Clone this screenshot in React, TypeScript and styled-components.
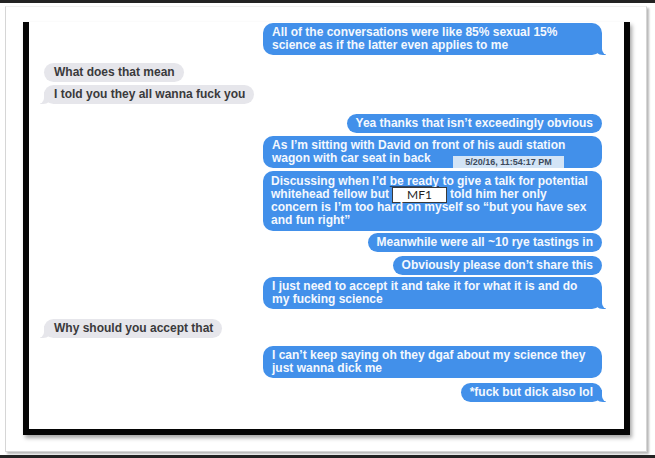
import React from "react";
import styled, { createGlobalStyle, css } from "styled-components";

const Global = createGlobalStyle`
  html, body { margin: 0; padding: 0; background: #ffffff; }
  body { font-family: "Liberation Sans", Arial, sans-serif; }
  * { box-sizing: border-box; }
`;

const Screen = styled.div`
  width: 655px;
  height: 458px;
  display: flex;
  flex-direction: column;
  background: #ffffff;
  overflow: hidden;
`;

const EdgeBar = styled.div`
  height: 3px;
  flex: none;
  background: #232323;
`;

const Stage = styled.div`
  flex: 1;
  display: flex;
  padding: 3px 8px 3px 5px;
`;

const Paper = styled.div`
  flex: 1;
  display: flex;
  flex-direction: column;
  background: #ffffff;
  border: 1px solid #d6d6d6;
  border-top-color: #f0f0f0;
  box-shadow: 2px 2px 2px rgba(0, 0, 0, 0.28);
  padding: 15px 16px 16px 17px;
`;

const Frame = styled.div`
  flex: 1;
  display: flex;
  flex-direction: column;
  background: #ffffff;
  border-left: 6px solid #050505;
  border-right: 6px solid #050505;
  border-bottom: 6px solid #050505;
  box-shadow: 2px 3px 4px rgba(0, 0, 0, 0.35);
`;

const Thread = styled.div`
  display: flex;
  flex-direction: column;
  padding: 1px 22px 0 15px;
`;

type Side = "me" | "them";

const BLUE = "#4290ea";
const GREY = "#e6e6eb";

const Bubble = styled.div<{
  $side: Side;
  $gap: number;
  $wide?: boolean;
  $tail?: boolean;
  $tall?: boolean;
}>`
  position: relative;
  margin-top: ${(p) => p.$gap}px;
  align-self: ${(p) => (p.$side === "me" ? "flex-end" : "flex-start")};
  width: ${(p) => (p.$wide ? "339px" : "auto")};
  padding: ${(p) => (p.$tall ? "4px 9px 4px 8px" : "3px 9px 3px 9px")};
  border-radius: 10px;
  font-family: "Liberation Sans", Arial, sans-serif;
  font-weight: 700;
  font-size: 12px;
  line-height: 13px;
  white-space: nowrap;
  ${(p) =>
    p.$side === "me"
      ? css`
          background: ${BLUE};
          color: #f4f8fe;
        `
      : css`
          background: ${GREY};
          color: #3a3a3c;
          padding-left: 10px;
        `}

  ${(p) =>
    p.$tail &&
    (p.$side === "me"
      ? css`
          &::before {
            content: "";
            position: absolute;
            bottom: 0;
            right: -4px;
            width: 12px;
            height: 12px;
            background: ${BLUE};
            border-bottom-left-radius: 9px 8px;
          }
          &::after {
            content: "";
            position: absolute;
            bottom: 0;
            right: -12px;
            width: 12px;
            height: 12px;
            background: #ffffff;
            border-bottom-left-radius: 6px;
          }
        `
      : css`
          &::before {
            content: "";
            position: absolute;
            bottom: 0;
            left: -4px;
            width: 12px;
            height: 12px;
            background: ${GREY};
            border-bottom-right-radius: 9px 8px;
          }
          &::after {
            content: "";
            position: absolute;
            bottom: 0;
            left: -12px;
            width: 12px;
            height: 12px;
            background: #ffffff;
            border-bottom-right-radius: 6px;
          }
        `)}
`;

const Line = styled.span`
  display: block;
  position: relative;
  z-index: 1;
`;

const Stamp = styled.span`
  position: absolute;
  z-index: 2;
  left: 190px;
  top: 20px;
  width: 111px;
  height: 12px;
  display: flex;
  align-items: center;
  justify-content: center;
  background: #d3e4f6;
  color: #3c4a5c;
  font-family: "Liberation Sans", Arial, sans-serif;
  font-weight: 700;
  font-size: 9px;
  line-height: 12px;
`;

const Redact = styled.span`
  display: inline-block;
  vertical-align: middle;
  width: 55px;
  height: 16px;
  margin: -2px 3px -2px 3px;
  background: #ffffff;
  border: 1px solid #3a3a3a;
  color: #1e1e1e;
  font-family: Lato, "Liberation Sans", sans-serif;
  font-weight: 400;
  font-size: 12px;
  line-height: 14px;
  text-align: center;
`;

const Marked = styled.span`
  text-decoration: underline;
  text-decoration-color: #27466e;
  text-underline-offset: 1px;
`;

type Msg = {
  side: Side;
  gap: number;
  lines: React.ReactNode[];
  tail?: boolean;
  stamp?: string;
  tall?: boolean;
};

const messages: Msg[] = [
  {
    side: "me",
    gap: 0,
    tail: true,
    lines: [
      "All of the conversations were like 85% sexual 15%",
      "science as if the latter even applies to me",
    ],
  },
  { side: "them", gap: 8, lines: ["What does that mean"] },
  { side: "them", gap: 3, tail: true, lines: ["I told you they all wanna fuck you"] },
  { side: "me", gap: 10, lines: ["Yea thanks that isn’t exceedingly obvious"] },
  {
    side: "me",
    gap: 3,
    stamp: "5/20/16, 11:54:17 PM",
    lines: [
      "As I’m sitting with David on front of his audi station",
      "wagon with car seat in back",
    ],
  },
  {
    side: "me",
    gap: 3,
    tall: true,
    lines: [
      <>
        Discussing when I’d <Marked>be ready</Marked> to give a talk for potential
      </>,
      <>
        whitehead fellow but<Redact>MF1</Redact>told him her only
      </>,
      "concern is I’m too hard on myself so “but you have sex",
      "and fun right”",
    ],
  },
  { side: "me", gap: 2, lines: ["Meanwhile were all ~10 rye tastings in"] },
  { side: "me", gap: 4, lines: ["Obviously please don’t share this"] },
  {
    side: "me",
    gap: 2,
    tail: true,
    lines: [
      "I just need to accept it and take it for what it is and do",
      "my fucking science",
    ],
  },
  { side: "them", gap: 10, tail: true, lines: ["Why should you accept that"] },
  {
    side: "me",
    gap: 8,
    lines: [
      "I can’t keep saying oh they dgaf about my science they",
      "just wanna dick me",
    ],
  },
  { side: "me", gap: 5, tail: true, lines: ["*fuck but dick also lol"] },
];

export default function App() {
  return (
    <>
      <Global />
      <Screen>
        <EdgeBar />
        <Stage>
          <Paper>
            <Frame>
              <Thread>
                {messages.map((m, i) => (
                  <Bubble
                    key={i}
                    $side={m.side}
                    $gap={m.gap}
                    $wide={m.lines.length > 1 && m.side === "me"}
                    $tail={m.tail}
                    $tall={m.tall}
                  >
                    {m.lines.map((l, j) => (
                      <Line key={j}>{l}</Line>
                    ))}
                    {m.stamp && <Stamp>{m.stamp}</Stamp>}
                  </Bubble>
                ))}
              </Thread>
            </Frame>
          </Paper>
        </Stage>
        <EdgeBar />
      </Screen>
    </>
  );
}
